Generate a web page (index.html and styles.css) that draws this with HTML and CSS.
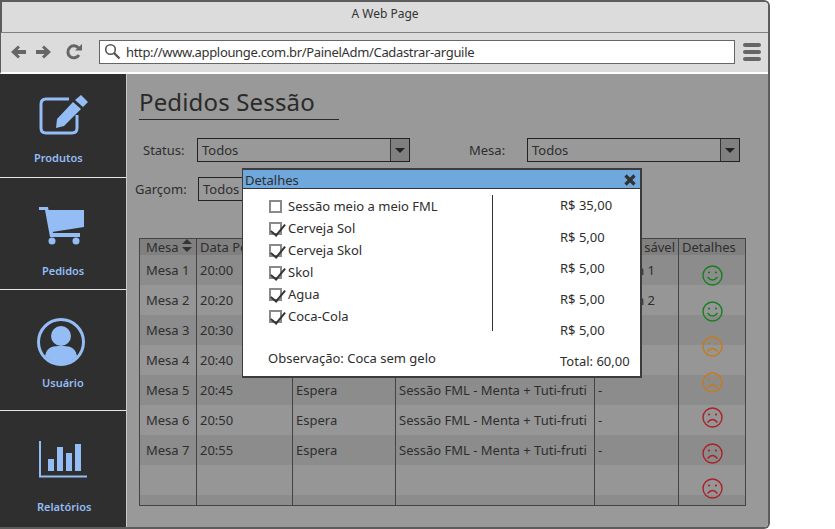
FILE: index.html
```html
<!DOCTYPE html>
<html lang="en">
<head>
    <meta charset="UTF-8">
    <meta name="viewport" content="width=device-width, initial-scale=1.0">
    <title>A Web Page</title>
    <link rel="stylesheet" href="styles.css">
</head>
<body>
<div class="window">
    <div class="titlebar">A Web Page</div>

    <div class="toolbar">
        <svg class="nav-icons" width="72" height="18" viewBox="0 0 72 18">
            <path d="M7 2.500 L0 9 L7 15.500 L9 13.500 L6.500 11 H15 V7 H6.500 L9 4.500 Z" fill="#666"/>
            <path d="M33 2.500 L40 9 L33 15.500 L31 13.500 L33.500 11 H25 V7 H33.500 L31 4.500 Z" fill="#666"/>
            <path d="M68 12 A6 6 0 1 1 67.500 5" fill="none" stroke="#666" stroke-width="3"/>
            <path d="M64 7.500 H71 V1 Z" fill="#666"/>
        </svg>
        <div class="url">
            <svg width="17" height="17" viewBox="0 0 17 17">
                <circle cx="6.500" cy="6.500" r="4.800" fill="none" stroke="#555" stroke-width="1.600"/>
                <path d="M10 10 L15.500 15.500" stroke="#555" stroke-width="2.400"/>
            </svg>
            <span>http://www.applounge.com.br/PainelAdm/Cadastrar-arguile</span>
        </div>
        <div class="burger"><i></i><i></i><i></i></div>
    </div>

    <div class="body">
        <nav class="sidebar">
            <a class="item item-prod">
                <svg width="50" height="40" viewBox="0 0 50 40">
                    <path d="M30 4 H7 Q2 4 2 9 V33 Q2 38 7 38 H33 Q38 38 38 33 V20" fill="none" stroke="#94bdf5" stroke-width="3"/>
                    <path d="M36 5 L42 0 L49 7 L44 12 Z M34 7 L42 14 L25 31 L17 33 L18 24 Z" fill="#94bdf5"/>
                </svg>
                <span>Produtos</span>
            </a>
            <a class="item item-ped">
                <svg width="46" height="40" viewBox="0 0 46 40">
                    <path d="M0 1 H9 L14 27 H41 V31 H11 L6 4 H0 Z" fill="#94bdf5"/>
                    <path d="M8 4 H45 V21 L13 26 Z" fill="#94bdf5"/>
                    <circle cx="13" cy="35" r="3.500" fill="#94bdf5"/>
                    <circle cx="37" cy="35" r="3.500" fill="#94bdf5"/>
                </svg>
                <span>Pedidos</span>
            </a>
            <a class="item item-user">
                <svg width="48" height="48" viewBox="0 0 48 48">
                    <circle cx="24" cy="24" r="22.500" fill="none" stroke="#94bdf5" stroke-width="3"/>
                    <circle cx="24" cy="18" r="10" fill="#94bdf5"/>
                    <path d="M8 38 C10 28 17 28 24 28 C31 28 38 28 40 38 A21 21 0 0 1 8 38 Z" fill="#94bdf5"/>
                </svg>
                <span>Usuário</span>
            </a>
            <a class="item item-rel">
                <svg width="48" height="37" viewBox="0 0 48 37">
                    <path d="M1 0 V35.500 H48" fill="none" stroke="#94bdf5" stroke-width="2"/>
                    <path d="M9 18 H15 V30 H9 Z M18 6 H24 V30 H18 Z M27 12 H33 V30 H27 Z M36 3 H42 V30 H36 Z" fill="#94bdf5"/>
                </svg>
                <span>Relatórios</span>
            </a>
        </nav>

        <main class="content">
            <h1 class="page-title">Pedidos Sessão</h1>

            <div class="filters">
                <label class="flabel status-l">Status:</label>
                <div class="select"><span>Todos</span><b></b></div>
                <label class="flabel mesa-l">Mesa:</label>
                <div class="select"><span>Todos</span><b></b></div>
            </div>
            <div class="filters filters-2">
                <label class="flabel garcom-l">Garçom:</label>
                <div class="select"><span>Todos</span><b></b></div>
            </div>

            <div class="table-wrap">
                <table class="orders">
                    <colgroup>
                        <col class="c1"><col class="c2"><col class="c3"><col class="c4"><col class="c5"><col class="c6">
                    </colgroup>
                    <thead>
                        <tr>
                            <th>Mesa <svg width="10" height="13" viewBox="0 0 10 13"><path d="M5 0 L10 5 H0 Z M0 8 H10 L5 13 Z" fill="#333"/></svg></th>
                            <th>Data Pedido</th><th></th><th></th><th class="resp">sável</th><th>Detalhes</th>
                        </tr>
                    </thead>
                    <tbody>
                        <tr><td>Mesa 1</td><td>20:00</td><td></td><td></td><td class="tail">n 1</td><td></td></tr>
                        <tr><td>Mesa 2</td><td>20:20</td><td></td><td></td><td class="tail">n 2</td><td></td></tr>
                        <tr><td>Mesa 3</td><td>20:30</td><td></td><td></td><td></td><td></td></tr>
                        <tr><td>Mesa 4</td><td>20:40</td><td></td><td></td><td></td><td></td></tr>
                        <tr><td>Mesa 5</td><td>20:45</td><td>Espera</td><td>Sessão FML - Menta + Tuti-fruti</td><td>-</td><td></td></tr>
                        <tr><td>Mesa 6</td><td>20:50</td><td>Espera</td><td>Sessão FML - Menta + Tuti-fruti</td><td>-</td><td></td></tr>
                        <tr><td>Mesa 7</td><td>20:55</td><td>Espera</td><td>Sessão FML - Menta + Tuti-fruti</td><td>-</td><td></td></tr>
                        <tr><td></td><td></td><td></td><td></td><td></td><td></td></tr>
                        <tr class="stub"><td></td><td></td><td></td><td></td><td></td><td></td></tr>
                    </tbody>
                </table>

                <div class="faces">
                    <svg class="face good" viewBox="0 0 21 21"><use href="#smile"/></svg>
                    <svg class="face good" viewBox="0 0 21 21"><use href="#smile"/></svg>
                    <svg class="face warn" viewBox="0 0 21 21"><use href="#frown"/></svg>
                    <svg class="face warn" viewBox="0 0 21 21"><use href="#frown"/></svg>
                    <svg class="face bad" viewBox="0 0 21 21"><use href="#frown"/></svg>
                    <svg class="face bad" viewBox="0 0 21 21"><use href="#frown"/></svg>
                    <svg class="face bad" viewBox="0 0 21 21"><use href="#frown"/></svg>
                </div>
            </div>
        </main>
    </div>

    <section class="modal">
        <header class="modal-head">
            <span>Detalhes</span>
            <svg width="12" height="12" viewBox="0 0 12 12"><path d="M1.500 1.500 L10.500 10.500 M10.500 1.500 L1.500 10.500" stroke="#333" stroke-width="3.200"/></svg>
        </header>
        <div class="modal-body">
            <div class="left">
                <ul class="checks">
                    <li><span class="box"></span>Sessão meio a meio FML</li>
                    <li><span class="box on"></span>Cerveja Sol</li>
                    <li><span class="box on"></span>Cerveja Skol</li>
                    <li><span class="box on"></span>Skol</li>
                    <li><span class="box on"></span>Agua</li>
                    <li><span class="box on"></span>Coca-Cola</li>
                </ul>
                <p class="obs">Observação: Coca sem gelo</p>
            </div>
            <div class="right">
                <span>R$ 35,00</span>
                <span>R$ 5,00</span>
                <span>R$ 5,00</span>
                <span>R$ 5,00</span>
                <span>R$ 5,00</span>
                <span>Total: 60,00</span>
            </div>
        </div>
    </section>
</div>

<svg class="defs" width="0" height="0">
    <defs>
        <g id="smile" fill="none" stroke="currentColor">
            <circle cx="10.500" cy="10.500" r="9.500" stroke-width="1.400"/>
            <circle cx="7" cy="7.500" r="1.100" fill="currentColor" stroke="none"/>
            <circle cx="14" cy="7.500" r="1.100" fill="currentColor" stroke="none"/>
            <path d="M5.500 12 Q10.500 18 15.500 12" stroke-width="1.400"/>
        </g>
        <g id="frown" fill="none" stroke="currentColor">
            <circle cx="10.500" cy="10.500" r="9.500" stroke-width="1.400"/>
            <circle cx="7" cy="7.500" r="1.100" fill="currentColor" stroke="none"/>
            <circle cx="14" cy="7.500" r="1.100" fill="currentColor" stroke="none"/>
            <path d="M5.500 15.500 Q10.500 9.500 15.500 15.500" stroke-width="1.400"/>
        </g>
    </defs>
</svg>
</body>
</html>
```

FILE: styles.css
```css
*{
    padding: 0;
    margin: 0;
    box-sizing: border-box;
}
body{
    background-color: white;
    font-family: "Noto Sans", sans-serif;
    font-size: 13px;
    color: #2e2e2e;
}
.defs{
    position: absolute;
}
.window{
    position: relative;
    width: 770px;
    height: 529px;
    border: 2px solid #5c5c5c;
    border-left-width: 0;
    border-top-right-radius: 6px;
    border-bottom-right-radius: 6px;
    display: flex;
    flex-direction: column;
    overflow: hidden;
}
.titlebar{
    height: 31px;
    background-color: #dcdcdc;
    border-left: 2px solid #5c5c5c;
    border-bottom: 1px solid #808080;
    text-align: center;
    font-size: 12px;
    line-height: 24px;
    color: #333;
}
.toolbar{
    height: 41px;
    background-color: #dcdcdc;
    border-left: 1px solid #5c5c5c;
    border-bottom: 2px solid white;
    display: flex;
    align-items: center;
    padding: 0 7px 2px 10px;
}
.nav-icons{
    margin-right: 16px;
}
.url{
    flex: 1;
    height: 24px;
    background-color: white;
    border: 1px solid #666;
    display: flex;
    align-items: center;
    gap: 5px;
    padding-left: 4px;
}
.url span{
    font-size: 13px;
    letter-spacing: -0.33px;
    color: #333;
}
.burger{
    width: 18px;
    margin-left: 8px;
    display: flex;
    flex-direction: column;
    gap: 3px;
}
.burger i{
    display: block;
    height: 4px;
    border-radius: 2px;
    background-color: #666;
}
.body{
    flex: 1;
    display: flex;
    min-height: 0;
}
.sidebar{
    width: 127px;
    background-color: #2f2f2f;
    border-right: 1px solid #c8c8c8;
    display: flex;
    flex-direction: column;
}
.item{
    display: flex;
    flex-direction: column;
    color: #94bdf5;
    font-size: 11px;
    font-weight: 600;
    border-bottom: 1px solid #e6e6e6;
    padding-left: 39px;
}
.item span{
    display: block;
}
.item-prod{
    height: 104px;
    padding-top: 21px;
    gap: 15px;
}
.item-prod span{
    margin-left: -5px;
}
.item-ped{
    height: 112px;
    padding-top: 28px;
    gap: 17px;
}
.item-ped span{
    margin-left: 3px;
}
.item-user{
    height: 121px;
    padding-top: 28px;
    padding-left: 37px;
    gap: 9px;
}
.item-user span{
    margin-left: 5px;
}
.item-rel{
    flex: 1;
    border-bottom: 0;
    padding-top: 30px;
    gap: 21px;
}
.item-rel span{
    margin-left: -2px;
}
.content{
    flex: 1;
    background-color: #999;
    padding: 12px 23px 0 12px;
}
.page-title{
    width: 200px;
    font-size: 24px;
    font-weight: 400;
    line-height: 32px;
    height: 34px;
    letter-spacing: 0.15px;
    color: #2a2a2a;
    border-bottom: 1px solid #2a2a2a;
}
.filters{
    display: flex;
    align-items: center;
    margin-top: 18px;
}
.filters-2{
    margin-top: 15px;
    margin-left: -4px;
}
.flabel{
    width: 58px;
    padding-left: 4px;
}
.mesa-l{
    width: 58px;
    margin-left: 59px;
    padding-left: 0;
}
.garcom-l{
    width: 63px;
    padding-left: 0;
}
.select{
    width: 213px;
    height: 24px;
    border: 1px solid #222;
    display: flex;
    align-items: center;
    justify-content: space-between;
    padding-left: 4px;
}
.select b{
    width: 19px;
    height: 100%;
    border-left: 1px solid #333;
    background-color: #808080;
    position: relative;
}
.select b::after{
    content: "";
    position: absolute;
    left: 4px;
    top: 9px;
    border-left: 5px solid transparent;
    border-right: 5px solid transparent;
    border-top: 5px solid #222;
}
.table-wrap{
    position: relative;
    margin-top: 37px;
    width: 606px;
}
.orders{
    width: 606px;
    table-layout: fixed;
    border-collapse: collapse;
    border: 1px solid #444;
}
.c1{ width: 57px; }
.c2{ width: 96px; }
.c3{ width: 103px; }
.c4{ width: 199px; }
.c5{ width: 84px; }
.c6{ width: 67px; }
.orders th{
    height: 16px;
    background-color: #808080;
    font-weight: 400;
    text-align: left;
    padding: 0 3px;
    border-left: 1px solid #444;
    border-right: 1px solid #444;
    white-space: nowrap;
    overflow: hidden;
    line-height: 16px;
}
.orders th:first-child{
    padding: 0 0 0 6px;
}
.orders th.resp{
    text-align: right;
}
.orders td{
    height: 30px;
    padding: 0 3px;
    border-left: 1px solid #444;
    border-right: 1px solid #444;
    white-space: nowrap;
    overflow: hidden;
}
.orders td:first-child{
    padding-left: 6px;
}
.orders td.tail{
    text-align: right;
    padding-right: 23px;
}
.orders tbody tr:nth-child(odd){
    background-color: #8c8c8c;
}
.orders tbody tr:nth-child(even){
    background-color: #969696;
}
.orders tr.stub td{
    height: 10px;
}
.faces{
    position: absolute;
    left: 563px;
    top: 27px;
    display: flex;
    flex-direction: column;
    gap: 14.500px;
}
.face{
    width: 21px;
    height: 21px;
    display: block;
}
.good{ color: #168020; }
.warn{ color: #c67a1c; }
.bad{ color: #a82228; }
.modal{
    position: absolute;
    left: 242px;
    top: 166px;
    width: 400px;
    height: 210px;
    background-color: white;
    border: 2px solid #3c3c3c;
    border-left-width: 1px;
    display: flex;
    flex-direction: column;
}
.modal-head{
    height: 19px;
    background-color: #6fa8dc;
    border-bottom: 1px solid #333;
    display: flex;
    align-items: center;
    justify-content: space-between;
    padding: 1px 4px 0 2px;
    line-height: 18px;
}
.modal-body{
    flex: 1;
    display: flex;
    padding: 6px 9px 0 25px;
}
.left{
    width: 225px;
}
.checks{
    list-style: none;
    height: 136px;
    border-right: 1px solid #333;
    margin-bottom: 18px;
}
.checks li{
    height: 22px;
    line-height: 22px;
    display: flex;
    align-items: center;
    gap: 6px;
}
.box{
    width: 13px;
    height: 13px;
    border: 2px solid #8a8a8a;
    background-color: white;
    position: relative;
    margin-left: 1px;
}
.box.on::after{
    content: "";
    position: absolute;
    left: 3px;
    top: -3px;
    width: 6px;
    height: 13px;
    border-right: 2px solid #333;
    border-bottom: 2px solid #333;
    transform: rotate(40deg);
}
.obs{
    line-height: 18px;
}
.right{
    flex: 1;
    display: flex;
    flex-direction: column;
    align-items: flex-start;
    padding-top: 1px;
    padding-left: 67px;
    gap: 13px;
    line-height: 18px;
}
.right span:first-child{
    margin-bottom: 1px;
}
```
